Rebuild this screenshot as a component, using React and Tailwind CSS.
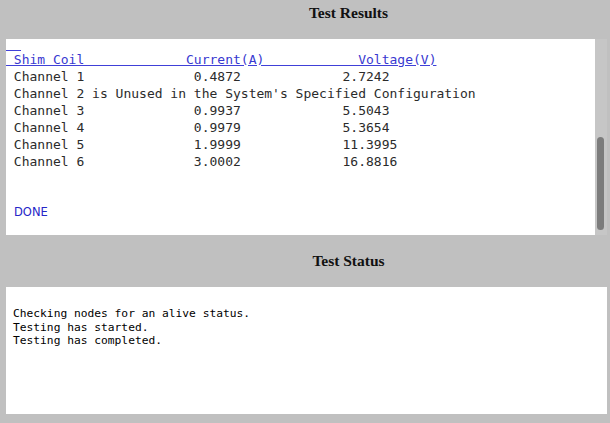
const rows = [
  ['Channel 1', '0.4872', '2.7242'],
  ['Channel 2 is Unused in the System\'s Specified Configuration'],
  ['Channel 3', '0.9937', '5.5043'],
  ['Channel 4', '0.9979', '5.3654'],
  ['Channel 5', '1.9999', '11.3995'],
  ['Channel 6', '3.0002', '16.8816'],
]

const statusLines = ['Checking nodes for an alive status.', 'Testing has started.', 'Testing has completed.']

const mono = { fontFamily: '"DejaVu Sans Mono", monospace' }

function Heading({ children, className = '' }) {
  return (
    <div className={`pl-[87px] text-center text-[15.5px] leading-[17px] font-bold text-[#111] ${className}`} style={{ fontFamily: '"Liberation Serif", serif' }}>
      {children}
    </div>
  )
}

export default function App() {
  const header = ' ' + 'Shim Coil'.padEnd(22) + 'Current(A)'.padEnd(22) + 'Voltage(V)'

  return (
    <div className="h-[423px] w-[610px] overflow-hidden bg-[#c0c0c0]">
      <Heading className="h-[39px] pt-[4px]">Test Results</Heading>

      <div className="ml-[6px] flex h-[196px] w-[601px]">
        <div className="flex-1 bg-white text-[13px] leading-[17px] text-[#2b2b2b]" style={mono}>
          <div className="h-[12px] w-[15px] border-b border-[#4040d8]" />
          <div className="whitespace-pre">
            <span className="text-[#3838d0] underline decoration-[#4040d8] underline-offset-[1px]">{header}</span>
          </div>
          {rows.map((r) => (
            <div key={r[0]} className="whitespace-pre">
              {r.length === 1 ? ' ' + r[0] : ' ' + r[0].padEnd(23) + r[1].padEnd(19) + r[2]}
            </div>
          ))}
          <div className="h-[34px]" />
          <div className="pl-[8px] text-[11.5px] leading-[16px] text-[#2626c8]" style={{ fontFamily: '"DejaVu Sans", sans-serif' }}>
            DONE
          </div>
        </div>
        <div className="flex w-[12px] flex-col justify-end bg-[#c6c6c6] pb-[5px] pl-[2px]">
          <div className="h-[93px] w-[7px] rounded-full bg-[#7c7c7c]" />
        </div>
      </div>

      <Heading className="h-[52px] pt-[17px]">Test Status</Heading>

      <div className="ml-[6px] h-[127px] w-[601px] bg-white px-[7px] pt-[20px] text-[11.25px] leading-[13.5px] text-black" style={mono}>
        {statusLines.map((l) => (
          <div key={l} className="whitespace-pre">{l}</div>
        ))}
      </div>
    </div>
  )
}
